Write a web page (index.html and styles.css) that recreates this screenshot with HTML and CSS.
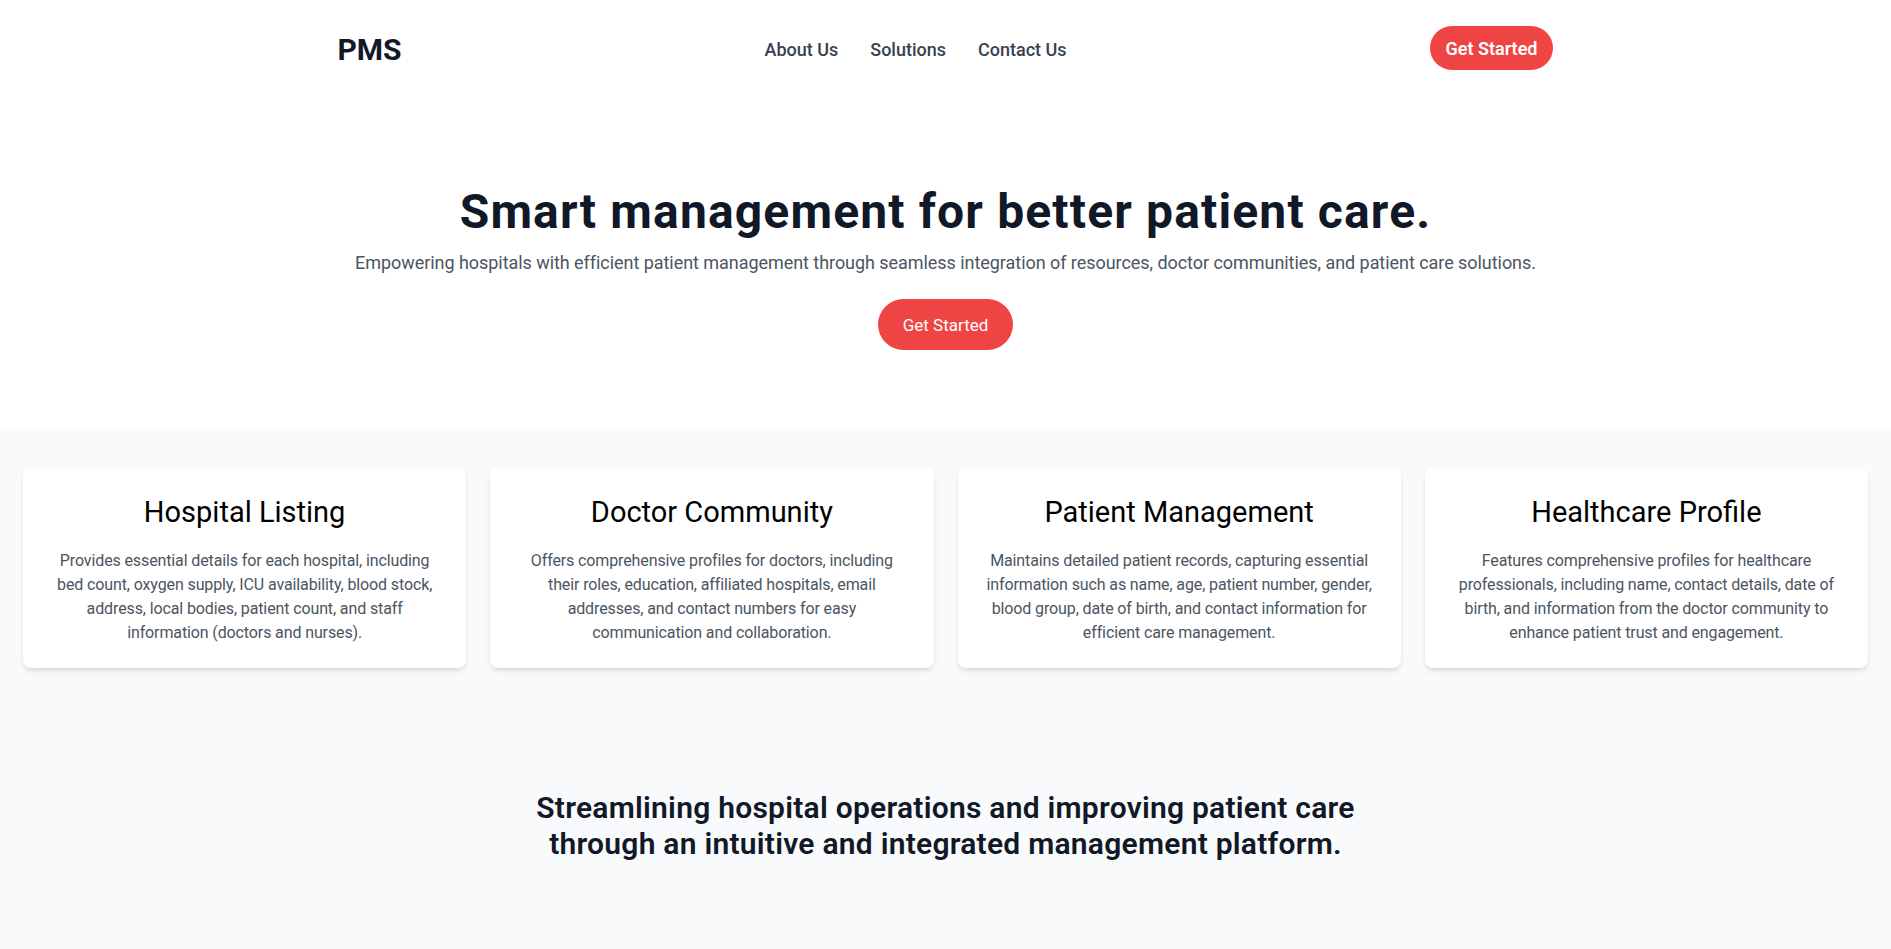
FILE: index.html
```html
<!DOCTYPE html>
<html lang="en">
<head>
<meta charset="utf-8">
<title>PMS</title>
<link rel="stylesheet" href="styles.css">
</head>
<body>
<header class="site-header">
  <div class="header-inner">
    <div class="logo">PMS</div>
    <nav class="main-nav">
      <a href="#">About Us</a>
      <a href="#">Solutions</a>
      <a href="#">Contact Us</a>
    </nav>
    <a class="btn btn-header" href="#">Get Started</a>
  </div>
</header>

<section class="hero">
  <h1 class="hero-title">Smart management for better patient care.</h1>
  <p class="hero-sub">Empowering hospitals with efficient patient management through seamless integration of resources, doctor communities, and patient care solutions.</p>
  <a class="btn btn-hero" href="#">Get Started</a>
</section>

<main class="content">
  <section class="features">
    <div class="card">
      <h2 class="card-title">Hospital Listing</h2>
      <p class="card-text">Provides essential details for each hospital, including<br>bed count, oxygen supply, ICU availability, blood stock,<br>address, local bodies, patient count, and staff<br>information (doctors and nurses).</p>
    </div>
    <div class="card">
      <h2 class="card-title">Doctor Community</h2>
      <p class="card-text">Offers comprehensive profiles for doctors, including<br>their roles, education, affiliated hospitals, email<br>addresses, and contact numbers for easy<br>communication and collaboration.</p>
    </div>
    <div class="card">
      <h2 class="card-title">Patient Management</h2>
      <p class="card-text">Maintains detailed patient records, capturing essential<br>information such as name, age, patient number, gender,<br>blood group, date of birth, and contact information for<br>efficient care management.</p>
    </div>
    <div class="card">
      <h2 class="card-title">Healthcare Profile</h2>
      <p class="card-text">Features comprehensive profiles for healthcare<br>professionals, including name, contact details, date of<br>birth, and information from the doctor community to<br>enhance patient trust and engagement.</p>
    </div>
  </section>

  <section class="mission">
    <p class="mission-text">Streamlining hospital operations and improving patient care through an intuitive and integrated management platform.</p>
  </section>
</main>
</body>
</html>
```
FILE: styles.css
```css
* { box-sizing: border-box; }

html, body {
  margin: 0;
  padding: 0;
}

body {
  font-family: Roboto, "Liberation Sans", sans-serif;
  background: #f9fafb;
  color: #111827;
  min-height: 100vh;
}

a { text-decoration: none; }

/* Header */
.site-header {
  background: #ffffff;
}

.header-inner {
  max-width: 1280px;
  margin: 0 auto;
  padding: 26px 32px;
  display: flex;
  align-items: center;
  justify-content: space-between;
}

.logo {
  font-size: 30px;
  line-height: 36px;
  font-weight: 700;
  color: #111827;
  padding-top: 3px;
}

.main-nav {
  display: flex;
  gap: 32px;
  padding-top: 3px;
}

.main-nav a {
  font-size: 18px;
  line-height: 28px;
  font-weight: 500;
  color: #374151;
}

.btn {
  display: inline-block;
  background: #ef4444;
  color: #ffffff;
  border-radius: 9999px;
}

.btn-header {
  font-size: 18px;
  line-height: 28px;
  font-weight: 600;
  padding: 9px 16px 7px;
}

/* Hero */
.hero {
  background: #ffffff;
  text-align: center;
  padding: 92px 32px 78px;
}

.hero-title {
  margin: 0;
  font-size: 48px;
  line-height: 48px;
  font-weight: 700;
  letter-spacing: 1.15px;
  color: #111827;
}

.hero-sub {
  margin: 13px 0 0;
  font-size: 18px;
  line-height: 28px;
  color: #4b5563;
  letter-spacing: -0.05px;
}

.btn-hero {
  margin-top: 22px;
  font-size: 17px;
  line-height: 27px;
  padding: 13px 25px 11px;
  font-weight: 400;
}

/* Features */
.features {
  display: grid;
  grid-template-columns: repeat(4, 1fr);
  gap: 24px;
  padding: 40px 23px;
}

.card {
  background: #ffffff;
  border-radius: 8px;
  padding: 26px 24px 23px;
  text-align: center;
  box-shadow: 0 4px 6px -1px rgba(0, 0, 0, 0.1), 0 2px 4px -2px rgba(0, 0, 0, 0.1);
}

.card-title {
  margin: 0 0 19px;
  font-size: 29px;
  line-height: 36px;
  font-weight: 400;
  color: #000000;
}

.card-text {
  margin: 0;
  font-size: 16px;
  line-height: 24px;
  color: #4b5563;
  letter-spacing: -0.12px;
  white-space: nowrap;
}

/* Mission */
.mission {
  padding: 82px 32px 78px;
}

.mission-text {
  max-width: 896px;
  margin: 0 auto;
  text-align: center;
  font-size: 30px;
  line-height: 36px;
  font-weight: 600;
  letter-spacing: 0.25px;
  color: #111827;
}
```
